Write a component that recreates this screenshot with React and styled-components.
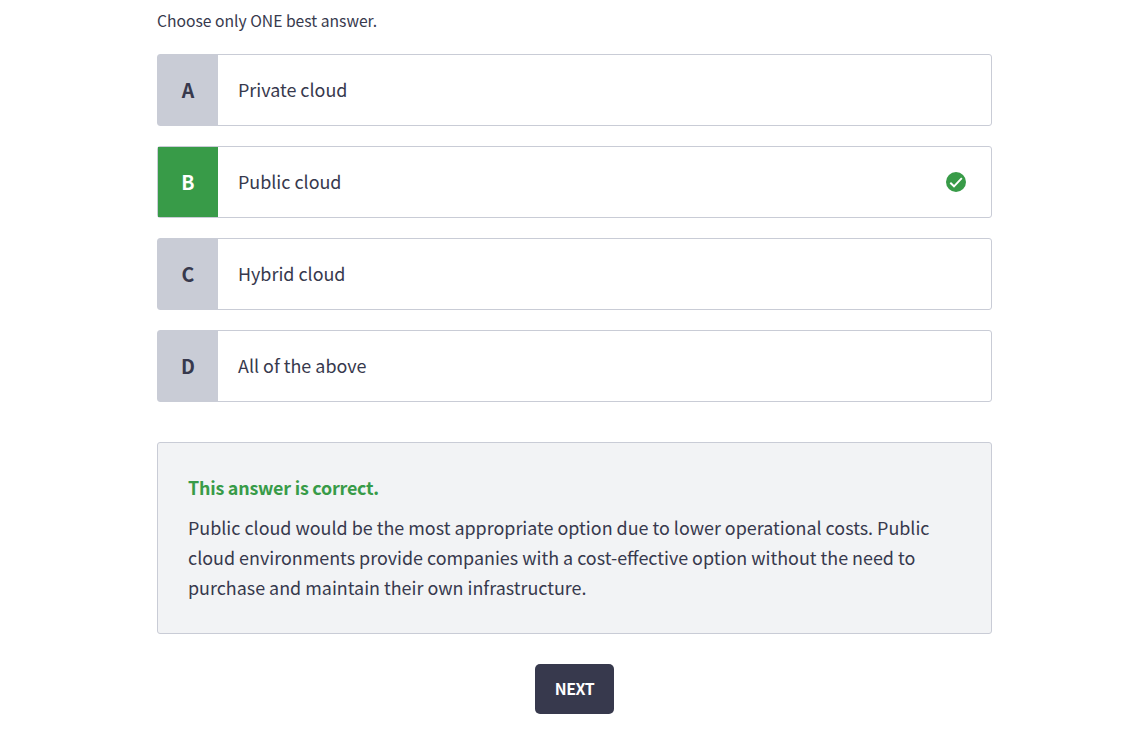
import React from "react";
import styled, { createGlobalStyle } from "styled-components";

const Global = createGlobalStyle`
  * { box-sizing: border-box; }
  body { margin: 0; background: #fff; color: #37394d; font-family: "Noto Sans CJK SC", "Open Sans", sans-serif; }
`;

const Page = styled.main`
  width: 835px;
  margin-left: 157px;
  height: 746px;
  padding-top: 6px;
  display: flex;
  flex-direction: column;
`;

const Hint = styled.p`
  margin: 0 0 18px;
  font-size: 15.68px;
  line-height: 30px;
`;

const Options = styled.div`
  display: flex;
  flex-direction: column;
  gap: 20px;
`;

const Option = styled.div`
  height: 72px;
  display: flex;
  align-items: stretch;
  border: 1px solid #c9ccd6;
  border-radius: 3px;
  background: #fff;
`;

const Letter = styled.span`
  width: 60px;
  text-align: center;
  line-height: 69px;
  font-size: 19.5px;
  font-weight: 700;
  background: ${(p) => (p.$correct ? "#389b48" : "#c9ccd6")};
  color: ${(p) => (p.$correct ? "#fff" : "#37394d")};
`;

const Label = styled.span`
  flex: 1;
  padding-left: 20px;
  font-size: 17.91px;
  line-height: 68px;
`;

const Check = styled.svg`
  width: 20px;
  height: 20px;
  margin-right: 25px;
  align-self: center;
`;

const Feedback = styled.section`
  margin-top: 40px;
  height: 192px;
  padding: 29px 30px 31px;
  border: 1px solid #c9ccd6;
  border-radius: 3px;
  background: #f2f3f5;
  font-size: 17.91px;
  line-height: 30px;
`;

const Verdict = styled.h2`
  margin: 0 0 10px;
  font-size: 17.9px;
  font-weight: 700;
  letter-spacing: -0.23px;
  color: #389b48;
`;

const Text = styled.p`
  margin: 0;
  white-space: nowrap;
`;

const Next = styled.button`
  margin: 30px auto 0;
  width: 79px;
  height: 50px;
  padding: 0 0 2px;
  border: 0;
  border-radius: 5px;
  background: #37394d;
  color: #fff;
  font: 700 15.9px "Noto Sans CJK SC", sans-serif;
  letter-spacing: -0.4px;
`;

const options = [
  ["A", "Private cloud"],
  ["B", "Public cloud"],
  ["C", "Hybrid cloud"],
  ["D", "All of the above"],
];

export default function App() {
  return (
    <Page>
      <Global />
      <Hint>Choose only ONE best answer.</Hint>
      <Options>
        {options.map(([letter, label]) => (
          <Option key={letter}>
            <Letter $correct={letter === "B"}>{letter}</Letter>
            <Label>{label}</Label>
            {letter === "B" && (
              <Check viewBox="0 0 20 20">
                <circle cx="10" cy="10" r="10" fill="#389b48" />
                <path d="M4.3 10.7 L8 14.3 L15.8 6.2" fill="none" stroke="#fff" strokeWidth="1.9" />
              </Check>
            )}
          </Option>
        ))}
      </Options>
      <Feedback>
        <Verdict>This answer is correct.</Verdict>
        <Text>
          Public cloud would be the most appropriate option due to lower operational costs. Public
          <br />
          cloud environments provide companies with a cost-effective option without the need to
          <br />
          purchase and maintain their own infrastructure.
        </Text>
      </Feedback>
      <Next>NEXT</Next>
    </Page>
  );
}
